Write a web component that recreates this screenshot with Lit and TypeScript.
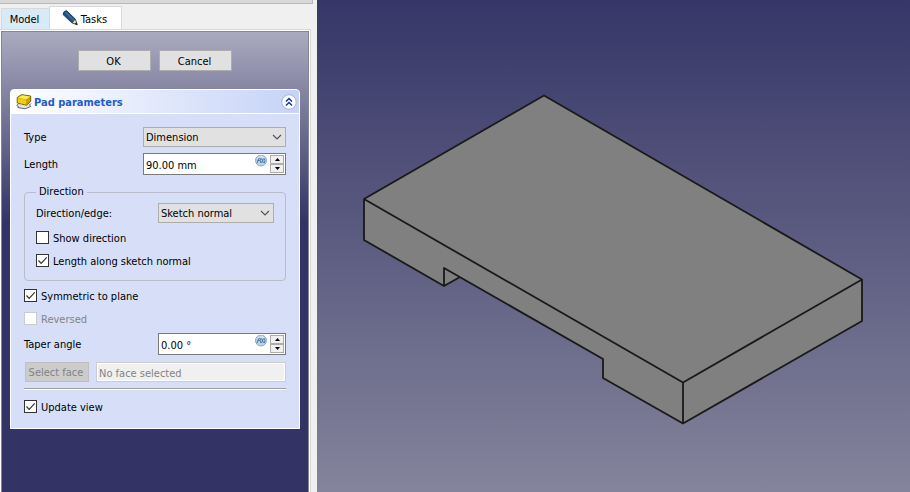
import { LitElement, html, css, svg } from "lit";
import { customElement, property, state } from "lit/decorators.js";

/** Drop-down with a flat grey face and a thin chevron. */
@customElement("combo-box")
class ComboBox extends LitElement {
  @property() label = "";
  @property({ attribute: false }) options: string[] = [];

  static styles = css`
    :host { display: block; }
    .box { display: grid; align-items: center; height: 20px; }
    .field {
      grid-area: 1 / 1; appearance: none; box-sizing: border-box; width: 100%; height: 20px;
      margin: 0; padding: 2px 20px 0 2px; border: 1px solid #adadad; border-radius: 0;
      background: #e1e1e1; color: #000; font: inherit; line-height: 16px;
    }
    .chevron { grid-area: 1 / 1; justify-self: end; margin-right: 4px; pointer-events: none; }
  `;

  render() {
    return html`<div class="box">
      <select class="field" aria-label=${this.label}>
        ${this.options.map((o) => html`<option>${o}</option>`)}
      </select>
      <svg class="chevron" width="10" height="6" viewBox="0 0 10 6" aria-hidden="true">
        <path d="M1 1 5 5 9 1" fill="none" stroke="#555" stroke-width="1.2" />
      </svg>
    </div>`;
  }
}

/** Quantity field with an expression badge and step buttons. */
@customElement("spin-box")
class SpinBox extends LitElement {
  @property() label = "";
  @property() unit = "";
  @property({ type: Number }) value = 0;

  static styles = css`
    :host { display: block; }
    .box {
      display: flex; box-sizing: border-box; height: 22px; padding: 1px;
      border: 1px solid #7a7a7a; background: #fff;
    }
    .field {
      flex: 1; min-width: 0; padding: 3px 0 0 1px; border: 0; outline: 0;
      background: none; color: #000; font: inherit;
    }
    .badge { flex: none; margin-right: 2px; }
    .steps { display: grid; grid-template-rows: 9px 9px; width: 14px; }
    .step {
      display: grid; place-items: center; box-sizing: border-box; padding: 0;
      border: 1px solid #adadad; background: #f0f0f0;
    }
  `;

  private step(by: number) {
    this.value += by;
  }

  render() {
    return html`<div class="box">
      <input class="field" aria-label=${this.label} .value=${`${this.value.toFixed(2)} ${this.unit}`} />
      <svg class="badge" width="13" height="13" viewBox="0 0 13 13" aria-hidden="true">
        <circle cx="6" cy="5.500" r="5.500" fill="#c3d2e3" stroke="#93a9c0" />
        <path d="M2.500 3Q6 .5 9.500 3" stroke="#e4ecf5" fill="none" />
        <path d="M2 8.300 3.700 3.500 5.100 3.100M2.500 5.500H4.900M5.900 3.300Q4.500 5.500 5.900 8.100M6.500 3.500 8.500 7.900M8.500 3.500 6.500 7.900M9.300 3.300Q10.700 5.500 9.300 8.100" stroke="#4b79ad" fill="none" />
      </svg>
      <div class="steps">
        <button class="step" aria-label="Increase" @click=${() => this.step(1)}>
          <svg width="5" height="3" viewBox="0 0 5 3"><path d="M0 3 2.500 0 5 3Z" /></svg>
        </button>
        <button class="step" aria-label="Decrease" @click=${() => this.step(-1)}>
          <svg width="5" height="3" viewBox="0 0 5 3"><path d="M0 0 2.500 3 5 0Z" /></svg>
        </button>
      </div>
    </div>`;
  }
}

/** Square tick box followed by its text. */
@customElement("check-row")
class CheckRow extends LitElement {
  @property() text = "";
  @property({ type: Boolean }) checked = false;
  @property({ type: Boolean }) disabled = false;

  static styles = css`
    :host { display: block; }
    .row { display: flex; align-items: center; gap: 4px; height: 13px; line-height: 13px; }
    .mark { display: grid; width: 13px; height: 13px; }
    .box {
      grid-area: 1 / 1; appearance: none; box-sizing: border-box; width: 13px; height: 13px;
      margin: 0; border: 1px solid #333; background: #fff;
    }
    .tick { grid-area: 1 / 1; pointer-events: none; }
    .box:not(:checked) + .tick { visibility: hidden; }
    .box:disabled { border-color: #ccc; }
    .row:has(.box:disabled) { color: #838383; }
    .text { padding-top: 2px; }
  `;

  render() {
    return html`<label class="row">
      <span class="mark">
        <input class="box" type="checkbox" .checked=${this.checked} ?disabled=${this.disabled} />
        <svg class="tick" width="13" height="13" viewBox="0 0 13 13" aria-hidden="true">
          <path d="M2.500 6.500 5.200 9.300 10.700 3.300" fill="none" stroke="#333" stroke-width="1.200" />
        </svg>
      </span>
      <span class="text">${this.text}</span>
    </label>`;
  }
}

/** The padded solid: faces first, edges above them. */
const solid = svg`
  <path fill="#808080" d="M227 95 545 279V321L366 424 286 378V359L143 277 127 286 47 240V199Z" />
  <path fill="none" stroke="#191919" stroke-width="1.800" stroke-linejoin="round"
    d="M227 95.500 545 279.500V321L366 423.500 286 378V359L127 268V286L47 240V199ZM47 199 366 382.500 545 279.500M366 382.500V423.500M127 286 143 277" />
`;

@customElement("app-root")
class AppRoot extends LitElement {
  @state() private open = true;

  static styles = css`
    :host {
      display: flex; min-height: 100vh; background: #f0f0f0; color: #000;
      font: 11px/14px "DejaVu Sans Condensed", "Noto Sans", sans-serif;
    }
    .dock { display: flex; flex-direction: column; flex: none; width: 317px; }
    .titlebar { height: 3px; margin-right: 4px; border: solid #b8b8b8; border-width: 0 1px 1px 0; background: #d9d9d9; }
    .tabs { display: flex; align-items: flex-end; height: 25px; padding-left: 1px; }
    .tab {
      display: flex; align-items: center; justify-content: center; gap: 3px; box-sizing: border-box;
      height: 21px; padding: 2px 2px 0 0; border: 1px solid #d9d9d9; border-bottom: 0;
      background: #d8e9f8; color: #000; font: inherit;
    }
    .tab.model { width: 48px; border-right: 0; }
    .tab.tasks { width: 73px; height: 24px; margin-bottom: -1px; background: #fff; }
    .pencil { margin-bottom: 4px; }
    .frame {
      display: flex; flex: 1; margin-right: 6px; padding: 1px 1px 0 0;
      border: solid #d9d9d9; border-width: 1px 1px 0 0; background: #fff;
    }
    .pane {
      flex: 1; margin-left: 1px; padding: 18px 8px; border: solid #828790; border-width: 1px 1px 0;
      background: linear-gradient(#aaaabf, #333366 190px);
    }
    .actions { display: flex; justify-content: center; gap: 8px; margin-bottom: 18px; }
    .button {
      box-sizing: border-box; width: 73px; height: 21px; padding: 2px 2px 0 0; border: 1px solid #adadad;
      background: #e1e1e1; color: #000; font: inherit;
    }
    .card { border: 1px solid #fff; border-radius: 4px 4px 0 0; overflow: hidden; background: #d6dff7; }
    .head {
      display: flex; align-items: center; gap: 2px; height: 23px; padding: 0 2px 0 5px;
      border-bottom: 1px solid #fff; background: linear-gradient(90deg, #fff, #c6d3f7);
    }
    .title { flex: 1; margin: 0; padding-top: 2px; color: #215dc6; font-size: 11px; font-weight: 700; }
    .fold { display: grid; padding: 0; border: 0; background: none; }
    .body { display: flex; flex-direction: column; gap: 10px; padding: 13px 13px 15px; }
    .top { display: grid; gap: 6px; }
    .line { display: flex; align-items: center; justify-content: space-between; }
    .name { padding-top: 2px; }
    .wide { width: 143px; }
    .mid { width: 128px; }
    .narrow { width: 116px; }
    .group {
      display: flex; flex-direction: column; gap: 10px; min-width: 0; margin: 0;
      padding: 4px 11px 13px; border: 1px solid #b9bccb; border-radius: 4px;
    }
    .legend { padding: 0 3px; }
    .group .line { margin-bottom: -2px; }
    .checks { display: grid; gap: 10px; margin-top: -2px; }
    .taper { display: grid; gap: 7px; margin-top: -2px; }
    .face { display: flex; gap: 7px; padding-left: 1px; }
    .face .button { width: 64px; height: 20px; border-color: #bfbfbf; background: #ccc; color: #838383; }
    .none {
      flex: 1; min-width: 0; box-sizing: border-box; height: 20px; padding: 2px 2px 0;
      border: 1px solid #ccc; background: #f0f0f0; box-shadow: inset 0 0 0 1px #fff;
      color: #838383; font: inherit;
    }
    .rule {
      box-sizing: border-box; width: 100%; height: 2px; margin: -4px 0 0;
      border: solid; border-width: 1px 0; border-color: #a0a0a0 #fff #fff;
    }
    .view { flex: 1; min-width: 0; background: linear-gradient(#363668, #84849c); }
    .scene { display: block; width: 100%; height: 100%; }
  `;

  render() {
    return html`
      <aside class="dock">
        <div class="titlebar"></div>
        <div class="tabs" role="tablist">
          <button class="tab model" role="tab">Model</button>
          <button class="tab tasks" role="tab" aria-selected="true">
            <svg class="pencil" width="16" height="16" viewBox="0 0 16 16" aria-hidden="true">
              <path d="M4.500 .6 13.300 9 10 13 1 4.500Q1 1.500 4.500 .6Z" fill="#24507f" stroke="#14304f" stroke-width=".8" />
              <path d="M3.500 2.300 12 10.500" stroke="#3d709f" stroke-width="1.500" />
              <path d="M13.300 9 15.300 14.700 10 13Z" fill="#dcdccc" stroke="#333" stroke-width=".8" />
              <path d="M14.200 12.300 15.600 15 12.700 14Z" fill="#111" />
            </svg>
            Tasks
          </button>
        </div>
        <div class="frame">
          <div class="pane">
            <div class="actions">
              <button class="button">OK</button>
              <button class="button">Cancel</button>
            </div>
            <section class="card">
              <div class="head">
                <svg width="16" height="16" viewBox="0 0 16 16" aria-hidden="true">
                  <path d="M2.500 9.500 .8 11.500 2.500 12.500 1.800 13.500 9 14.800 14.800 12.500 13.500 11 15 9.500" fill="#e2e2e2" stroke="#666" />
                  <path d="M1.200 3.500 5.500 .6 14.700 2V7.500L10.500 11.200 1.200 9Z" fill="#c9a500" stroke="#5c4d00" stroke-width=".8" />
                  <path d="M2 3.700 6 1.200 14 2.400 10.300 5.200Z" fill="#fdee4c" />
                  <path d="M1.800 4.200 10 5.800V10.600L1.800 8.700Z" fill="#efd010" />
                </svg>
                <h2 class="title">Pad parameters</h2>
                <button class="fold" aria-label="Collapse" @click=${() => (this.open = !this.open)}>
                  <svg width="16" height="16" viewBox="0 0 16 16">
                    <circle cx="8" cy="8" r="7.300" fill="#fff" stroke="#b4bcd8" stroke-width="1.200" />
                    <path d="M5 7.500 8 4.500 11 7.500M5 11.500 8 8.500 11 11.500" fill="none" stroke="#0b3aa0" stroke-width="1.500" />
                  </svg>
                </button>
              </div>
              ${this.open ? this.form() : ""}
            </section>
          </div>
        </div>
      </aside>
      <main class="view">
        <svg class="scene" viewBox="0 0 593 492" preserveAspectRatio="xMidYMid meet" role="img" aria-label="Pad">
          ${solid}
        </svg>
      </main>
    `;
  }

  private form() {
    return html`
      <div class="body">
        <div class="top">
          <div class="line"><span class="name">Type</span>
            <combo-box class="wide" label="Type" .options=${["Dimension", "To last", "Up to face"]}></combo-box>
          </div>
          <div class="line"><span class="name">Length</span>
            <spin-box class="wide" label="Length" value="90" unit="mm"></spin-box>
          </div>
        </div>
        <fieldset class="group">
          <legend class="legend">Direction</legend>
          <div class="line"><span class="name">Direction/edge:</span>
            <combo-box class="narrow" label="Direction/edge" .options=${["Sketch normal", "Custom direction"]}></combo-box>
          </div>
          <check-row text="Show direction"></check-row>
          <check-row text="Length along sketch normal" checked></check-row>
        </fieldset>
        <div class="checks">
          <check-row text="Symmetric to plane" checked></check-row>
          <check-row text="Reversed" disabled></check-row>
        </div>
        <div class="taper">
          <div class="line"><span class="name">Taper angle</span>
            <spin-box class="mid" label="Taper angle" value="0" unit="°"></spin-box>
          </div>
          <div class="face">
            <button class="button" disabled>Select face</button>
            <input class="none" aria-label="Face" value="No face selected" disabled />
          </div>
        </div>
        <hr class="rule" />
        <check-row text="Update view" checked></check-row>
      </div>
    `;
  }
}
